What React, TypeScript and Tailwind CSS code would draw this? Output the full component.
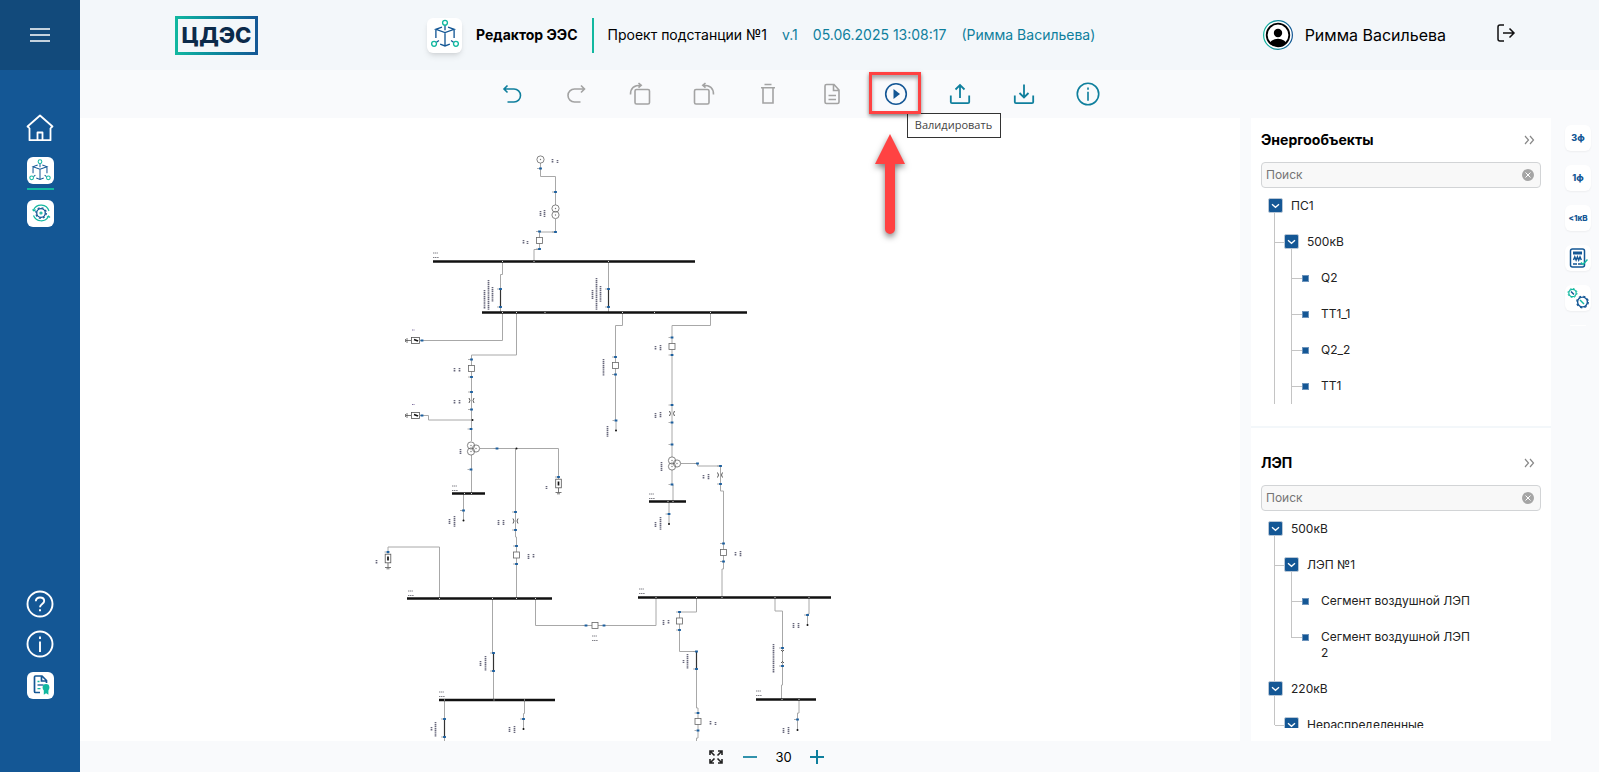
import React from 'react';

interface TreeNode {
  label: string;
  children?: TreeNode[];
  more?: boolean;
}

const substations: TreeNode[] = [
  {
    label: 'ПС1',
    more: true,
    children: [
      {
        label: '500кВ',
        more: true,
        children: [
          { label: 'Q2' },
          { label: 'ТТ1_1' },
          { label: 'Q2_2' },
          { label: 'ТТ1', more: true },
        ],
      },
    ],
  },
];

const powerLines: TreeNode[] = [
  {
    label: '500кВ',
    children: [
      {
        label: 'ЛЭП №1',
        children: [{ label: 'Сегмент воздушной ЛЭП' }, { label: 'Сегмент воздушной ЛЭП 2' }],
      },
    ],
  },
  { label: '220кВ', children: [{ label: 'Нераспределенные', children: [] }] },
];

/* ---------- icons ---------- */

const CubeIcon = ({ size }: { size: number }) => (
  <svg width={size} height={size} viewBox="0 0 28 28" fill="none" strokeWidth="1.1">
    <g stroke="#145795">
      <path d="M14 6v4M11.500 7.500 6.500 9.300l7.500 2.700 7.500-2.700-5-1.800M14 12V23M6.500 9.300v7.200M21.500 9.300v7.200M9 18.500 7 20M10 21.500l4 1.500 4-1.500M19 18.500l2 1.500" />
    </g>
    <g stroke="#12b8a0">
      <circle cx="14" cy="4" r="2" />
      <circle cx="5" cy="21.300" r="2" />
      <circle cx="23" cy="21.300" r="2" />
    </g>
  </svg>
);

const GearCycleIcon = () => (
  <svg width="27" height="27" viewBox="0 0 27 27" fill="none">
    <g stroke="#12b8a0" strokeWidth="1.2">
      <path d="M6.500 10A8.300 8.300 0 0 1 22 11M21.500 16.500A8.300 8.300 0 0 1 6.500 15.500" />
      <path d="m5.500 9.500 1.500 1.500 1.500-1.500M20 17.500l1.500-1.500 1.500 1.500" />
      <circle cx="14" cy="13" r="1" />
    </g>
    <circle cx="14" cy="13" r="4.300" stroke="#145795" strokeWidth="1.300" />
    <circle cx="14" cy="13" r="5.300" stroke="#145795" strokeWidth="1.200" strokeDasharray="2 2.160" />
  </svg>
);

const HomeIcon = () => (
  <svg width="28" height="28" viewBox="0 0 28 28" fill="none" stroke="#fff" strokeWidth="1.800" strokeLinejoin="round">
    <path d="M3.500 14v12.200h21V14M3.500 14 1.500 12.500 14 1.500l12.500 11-2 1.500" />
    <path d="M11.500 26v-7.500h5V26" />
  </svg>
);

const HelpIcon = () => (
  <svg width="28" height="28" viewBox="0 0 28 28" fill="none" stroke="#fff" strokeWidth="1.900">
    <circle cx="14" cy="14" r="12.500" />
    <path d="M9.800 11.200c.200-2.600 2-3.700 4.200-3.700 2.500 0 4.200 1.400 4.200 3.500 0 3-4.200 3-4.200 6.300M14 19.300v2" />
  </svg>
);

const InfoIcon = ({ size }: { size: number }) => (
  <svg width={size} height={size} viewBox="0 0 28 28" fill="none" stroke="currentColor" strokeWidth="1.900">
    <circle cx="14" cy="14" r="12.500" />
    <path d="M14 11.500V22M14 6.500v2.500" />
  </svg>
);

const LicenseIcon = () => (
  <svg width="27" height="27" viewBox="0 0 27 27" fill="none">
    <path d="M13 20.500H8.500a1 1 0 0 1-1-1V5a1 1 0 0 1 1-1H15l4.500 4.500V11M14.500 4v5h5" stroke="#145795" strokeWidth="1.700" />
    <path d="M10.500 13h6" stroke="#145795" strokeWidth="1.300" />
    <path d="M10.500 9.500h2M10.500 16.700h3" stroke="#12b8a0" strokeWidth="1.300" />
    <circle cx="19" cy="15.500" r="3.400" fill="#12b8a0" />
    <path d="M16.800 18h4.600v4.700l-2.300-1.400-2.300 1.400z" fill="#12b8a0" />
  </svg>
);

const LogoutIcon = () => (
  <svg width="20" height="20" viewBox="0 0 20 20" fill="none" stroke="#111" strokeWidth="1.500">
    <path d="M8 2H4a2 2 0 0 0-2 2v12a2 2 0 0 0 2 2h4M7 10h11M13.500 5.500 18 10l-4.500 4.500" />
  </svg>
);

const AvatarIcon = () => (
  <svg width="30" height="30" viewBox="0 0 30 30" fill="none">
    <defs>
      <linearGradient id="ring">
        <stop offset="0" stopColor="#12b8a0" />
        <stop offset="1" stopColor="#145795" />
      </linearGradient>
      <clipPath id="face">
        <circle cx="15" cy="15" r="11.500" />
      </clipPath>
    </defs>
    <circle cx="15" cy="15" r="14.400" stroke="url(#ring)" strokeWidth="1.200" fill="#fff" />
    <circle cx="15" cy="15" r="11.300" stroke="#000" strokeWidth="1.800" />
    <circle cx="15" cy="13" r="4.200" fill="#000" />
    <ellipse cx="15" cy="24.500" rx="8.500" ry="5.700" fill="#000" clipPath="url(#face)" />
  </svg>
);

const Tool = ({ children }: { children: React.ReactNode }) => (
  <svg width="24" height="24" viewBox="0 0 24 24" fill="none" stroke="currentColor" strokeWidth="1.600">
    {children}
  </svg>
);

const tools = [
  { label: 'Отменить', color: 'text-[#0f7f9d]', icon: <Tool><path d="M7.500 3.500 4 7l3.500 3.500M4 7h10a6 6 0 0 1 0 13H7.500" /></Tool> },
  { label: 'Повторить', color: 'text-[#a3a3a3]', icon: <Tool><path d="M17 3.500 20.500 7 17 10.500M20.500 7h-10a6 6 0 0 0 0 13H16.500" /></Tool> },
  { label: 'Повернуть вправо', color: 'text-[#a3a3a3]', icon: <Tool><rect x="7" y="7.500" width="14.500" height="14.500" rx="1.500" /><path d="M2.500 12.500C2.500 6 6 3.300 13 3.300M10.500 1l2.700 2.300-2.700 2.400" /></Tool> },
  { label: 'Повернуть влево', color: 'text-[#a3a3a3]', icon: <Tool><rect x="2.500" y="7.500" width="14.500" height="14.500" rx="1.500" /><path d="M21.500 12.500C21.500 6 18 3.300 11 3.300M13.500 1l-2.700 2.300 2.700 2.400" /></Tool> },
  { label: 'Удалить', color: 'text-[#a3a3a3]', icon: <Tool><path d="M8.500 2.500h7M5 5.700h14M7 6v15h10V6" /></Tool> },
  { label: 'Отчёт', color: 'text-[#a3a3a3]', icon: <Tool><path d="M14 2.500H6.500a1.500 1.500 0 0 0-1.500 1.500v16A1.500 1.500 0 0 0 6.500 21.500h11a1.500 1.500 0 0 0 1.500-1.500V8zM13.500 2.500V8.500H19M8.500 13.500h7.500M8.500 17.500h7.500" /></Tool> },
  { label: 'Валидировать', color: 'text-[#145795]', icon: <Tool><circle cx="12" cy="12" r="10.300" /><path d="M9.500 7v10l6.500-5z" fill="currentColor" stroke="none" /></Tool> },
  { label: 'Выгрузить', color: 'text-[#0f7f9d]', icon: <Tool><path d="M12 16V3M7.500 7.500 12 3l4.500 4.500M2.800 13.500v6.500a1.200 1.200 0 0 0 1.200 1.200h16a1.200 1.200 0 0 0 1.200-1.200V13.500" strokeWidth="1.800" /></Tool> },
  { label: 'Загрузить', color: 'text-[#0f7f9d]', icon: <Tool><path d="M12 2.500v13M7.500 11 12 15.500l4.500-4.500M2.800 13.500v6.500a1.200 1.200 0 0 0 1.200 1.200h16a1.200 1.200 0 0 0 1.200-1.200V13.500" strokeWidth="1.800" /></Tool> },
  { label: 'Информация', color: 'text-[#0f7f9d]', icon: <InfoIcon size={24} /> },
];

/* ---------- one-line diagram ---------- */

const wires = [
  'M540.5 163V176.500H555.500V205M555.500 219V232H539.500V249.500H534V261',
  'M502.500 262V274.500H500.500V312M608.500 262V312',
  'M502.500 312V340.500H420M516.500 312V355H471.500V441M428.500 420H472M420 415.500H428.500V420',
  'M471.500 455V493M463.500 494V520M480 448.500H558.500V479M515.500 448V537H516.500V598',
  'M388 554V547H439.500V598M492.500 598V653H493.500V700M535.500 598V625.500H656V598',
  'M444.500 700V741M524.500 700V713.500H523.500V729',
  'M622.500 312V325.500H615.500V420H616V430M710.500 312V325.500H672V457M672 470V485H673V501M669 501V524',
  'M681 463.500H697.500V466H720.500V491H723.500V569H722V598',
  'M696.500 598V612H679.500V651.500H696.500V708H698V738H696.500V741',
  'M775 598V611H782.500V685H781.500V699M809 598V614H807.500V625M799 699V713H797.500V730',
];

const buses = [
  [433, 695, 261.5], [482, 747, 312.5], [452, 485, 493.5], [407, 552, 598.5],
  [439, 555, 700], [649, 686, 501.5], [638, 831, 597.5], [756, 816, 699.5],
];

const taps = [
  [502.5, 261.5], [534, 261.5], [608.5, 261.5], [502.5, 312.5], [516.5, 312.5], [545, 312.5], [622.5, 312.5],
  [654.5, 312.5], [710.5, 312.5], [464.5, 493.5], [471.5, 493.5], [439.5, 598.5], [492.5, 598.5], [516.5, 598.5],
  [535.5, 598.5], [444.5, 700], [494, 700], [524.5, 700], [668, 501.5], [673, 501.5], [656, 597.5],
  [696.5, 597.5], [722, 597.5], [775, 597.5], [809, 597.5], [782, 699.5], [799, 699.5],
];

const terminals = [
  [540.5, 168.5], [555.5, 192], [555.5, 232], [539.5, 231.5], [539.5, 249], [500.5, 289], [500.5, 307],
  [608.5, 289], [608.5, 307], [422, 340.5], [471.5, 359.5], [471.5, 377], [471.5, 392], [471.5, 409.5],
  [422, 415.5], [471, 429], [471, 469.5], [463.5, 510.5], [497, 448.5], [558.5, 477], [515.5, 512],
  [515.5, 530], [516.5, 546], [516.5, 564], [388, 552], [493.5, 653], [493.5, 671], [586, 625.5],
  [604, 625.5], [444.5, 719], [444.5, 737], [523.5, 719], [615.5, 357], [615.5, 374.5], [616, 420.5],
  [672, 337.5], [672, 355], [672, 405], [672, 422.5], [672, 444.5], [672, 484.5], [669, 514],
  [697.5, 463.5], [720.5, 466], [720.5, 484], [723.5, 543.5], [723.5, 561.5], [679.5, 612], [679.5, 630],
  [696.5, 651.5], [696.5, 669], [698, 713], [698, 730.5], [782.5, 648], [782.5, 666], [807.5, 615], [797.5, 719.5],
];

const breakers = [
  [539.5, 240.5], [471.5, 368.5], [516.5, 555], [595, 625.5], [615.5, 365.5],
  [672, 346.5], [723.5, 552.5], [679.5, 621], [698, 721.5],
];

const segments = [[500.5, 289], [608.5, 289], [493.5, 653], [444.5, 719], [696.5, 651.5]];
const windings = [
  [540.5, 159.5], [555.5, 208.5], [555.5, 215], [471, 445.5], [471, 451.5], [476, 448.5],
  [672, 460.5], [672, 466.5], [677, 463.5],
];
const currentTransformers = [[471.5, 400.5], [515.5, 521], [672, 413.5], [720, 475]];
const nodes = [[472.5, 420], [516.5, 448.5], [463.5, 520.5], [523.5, 729], [616, 430.5], [669, 524], [807.5, 625], [797.5, 730]];

// x, y, height of the vertical captions
const captions = [
  [552, 159, 4], [557, 160, 3], [540, 211, 5], [544, 210, 7], [523, 240, 4], [527, 241, 3],
  [484, 290, 19], [488, 280, 30], [492, 287, 15], [592, 290, 9], [596, 278, 32], [600, 286, 16],
  [454, 368, 4], [459, 368, 4], [454, 400, 4], [459, 400, 4], [460, 449, 5], [449, 519, 5], [454, 516, 11],
  [546, 486, 3], [498, 520, 5], [503, 520, 5], [528, 554, 5], [533, 554, 4], [376, 560, 4],
  [480, 661, 5], [485, 656, 15], [431, 727, 4], [435, 722, 15], [509, 727, 5], [514, 726, 7],
  [603, 359, 17], [607, 426, 11], [655, 346, 4], [660, 345, 6], [655, 413, 5], [660, 412, 6], [661, 462, 9],
  [655, 522, 5], [660, 517, 13], [703, 475, 4], [708, 474, 6], [735, 552, 4], [740, 551, 6],
  [663, 620, 5], [668, 620, 4], [683, 660, 3], [687, 654, 15], [710, 721, 4], [715, 722, 3],
  [773, 644, 29], [793, 623, 5], [798, 623, 5], [783, 728, 5], [788, 727, 7],
];

// x, y of the two-line bus captions
const busCaptions = [[433, 253], [452, 486], [408, 591], [439, 692], [649, 494], [639, 589], [756, 691], [592, 636]];

const Diagram = () => (
  <svg className="block h-full w-full" viewBox="80 118 1160 623" preserveAspectRatio="xMinYMin slice" fill="none">
    {wires.map((d) => (
      <path key={d} d={d} stroke="#a8a8a8" strokeWidth="1" />
    ))}
    {segments.map(([x, y]) => (
      <path key={`${x}-${y}`} d={`M${x} ${y}v18`} stroke="#333" strokeWidth="1.200" />
    ))}
    {captions.map(([x, y, h]) => (
      <path key={`${x}-${y}`} d={`M${x + 0.5} ${y}v${h}`} stroke="#66667a" strokeWidth="1.700" strokeDasharray="1.300 .6" />
    ))}
    {busCaptions.map(([x, y]) => (
      <path key={`${x}-${y}`} d={`M${x} ${y}h5M${x} ${y + 4.5}h6`} stroke="#808088" strokeDasharray="1.300 .5" />
    ))}
    <path d="M412 330h3M412 404.500h3" stroke="#8070a0" strokeDasharray="1 .5" />
    {buses.map(([x1, x2, y]) => (
      <path key={`${x1}-${y}`} d={`M${x1} ${y}H${x2}`} stroke="#111" strokeWidth="2.300" />
    ))}
    {taps.map(([x, y]) => (
      <rect key={`${x}-${y}`} x={x - 0.5} y={y - 0.5} width="1" height="1" fill="#ddd" />
    ))}
    {windings.map(([x, y]) => (
      <g key={`${x}-${y}`}>
        <circle cx={x} cy={y} r="3.600" stroke="#666" strokeWidth=".8" />
        <circle cx={x} cy={y} r=".7" fill="#777" />
      </g>
    ))}
    {breakers.map(([x, y]) => (
      <rect key={`${x}-${y}`} x={x - 3} y={y - 3} width="6" height="6" fill="#fff" stroke="#666" strokeWidth=".8" />
    ))}
    {currentTransformers.map(([x, y]) => (
      <path key={`${x}-${y}`} d={`M${x - 2.5} ${y - 2.5}q2 2.500 0 5M${x + 2.5} ${y - 2.5}q-2 2.500 0 5`} stroke="#444" strokeWidth=".9" />
    ))}
    {[340.5, 415.5].map((y) => (
      <g key={y} stroke="#555" strokeWidth=".8">
        <rect x="411.500" y={y - 3} width="8" height="6" fill="#fff" />
        <path d={`M414 ${y - 1}l4 1.500`} stroke="#111" strokeWidth="1.600" />
        <path d={`M411 ${y}h-5M407 ${y - 2.5}v5M405.500 ${y - 1.5}v3`} />
      </g>
    ))}
    {[[558.5, 483.5], [388, 558.5]].map(([x, y]) => (
      <g key={x} stroke="#555" strokeWidth=".8">
        <rect x={x - 2.8} y={y - 4.3} width="5.600" height="8.600" fill="#fff" />
        <path d={`M${x} ${y - 2}v4`} stroke="#111" strokeWidth="1.700" />
        <path d={`M${x} ${y + 4.5}v4.500M${x - 3} ${y + 9}h6M${x - 1.5} ${y + 10.3}h3`} />
      </g>
    ))}
    {terminals.map(([x, y]) => (
      <g key={`${x}-${y}`}>
        <path d={`M${x - 3.5} ${y}h2`} stroke="#999" strokeWidth=".8" />
        <rect x={x - 1.4} y={y - 1} width="2.800" height="2" fill="#1c5f9e" />
      </g>
    ))}
    <path d="m781 650 1.500 1.500L784 650M781 663l1.500-1.500L784 663" stroke="#333" strokeWidth=".8" />
    {nodes.map(([x, y]) => (
      <circle key={`${x}-${y}`} cx={x} cy={y} r="1" fill="#111" />
    ))}
  </svg>
);

/* ---------- panels ---------- */

const Branch = ({ node, depth, last, first }: { node: TreeNode; depth: number; last: boolean; first: boolean }) => {
  const open = !last || node.more;
  return (
    <li className={`relative ${depth === 1 ? 'pl-4' : ''} ${depth === 2 ? 'pl-4' : ''}`}>
      {depth === 0 && open && <span className={`absolute bottom-0 left-[6px] w-px bg-[#c4c4c4] ${first ? 'top-[18px]' : 'top-0'}`} />}
      {depth === 0 && !first && <span className="absolute left-[6px] top-0 h-[18px] w-px bg-[#c4c4c4]" />}
      {/* the rail reaches up to the parent's toggle */}
      {depth > 0 && (
        <>
          <span className={`absolute -top-[11px] w-px bg-[#c4c4c4] ${depth === 1 ? 'left-[6px]' : 'left-[7px]'} ${open ? 'bottom-0' : 'h-[29px]'}`} />
          <span className="absolute left-[7px] top-[18px] h-px w-3 bg-[#c4c4c4]" />
        </>
      )}
      <div className="flex gap-2 py-[10px]">
        {node.children ? (
          <button aria-label={`Свернуть ${node.label}`} className="relative flex size-[15px] shrink-0 items-center justify-center rounded-xs border border-[#b9c7d6] bg-[#145795]">
            <svg width="9" height="9" viewBox="0 0 9 9" fill="none" stroke="#fff" strokeWidth="1.300">
              <path d="m1 3.300 3.500 3 3.500-3" />
            </svg>
          </button>
        ) : (
          <span className="relative ml-[2px] mr-1 mt-[5px] size-[7px] shrink-0 border border-[#6d94bc] bg-[#145795]" />
        )}
        <span className="w-[150px] text-xs leading-4 text-[#222]">{node.label}</span>
      </div>
      {node.children && (
        <ul>
          {node.children.map((child, i) => (
            <Branch key={child.label} node={child} depth={depth + 1} first={i === 0} last={i === node.children!.length - 1} />
          ))}
        </ul>
      )}
    </li>
  );
};

const TreePanel = ({ id, title, items }: { id: string; title: string; items: TreeNode[] }) => (
  <>
    <div className="flex h-11 shrink-0 items-center justify-between pl-[10px] pr-4">
      <h2 className="text-sm font-bold text-black">
        <label htmlFor={id}>{title}</label>
      </h2>
      <button aria-label={`Скрыть ${title}`}>
        <svg width="11" height="10" viewBox="0 0 11 10" fill="none" stroke="#888" strokeWidth="1.200">
          <path d="m1 1 3.500 4L1 9M6 1l3.500 4L6 9" />
        </svg>
      </button>
    </div>
    <div className="mx-[10px] flex h-[26px] shrink-0 items-center rounded border border-[#d2d4d6] bg-[#f8f8f8] pl-1 pr-[6px]">
      <input id={id} placeholder="Поиск" className="min-w-0 flex-1 bg-transparent text-xs outline-none placeholder:text-[#757575]" />
      <button aria-label="Очистить">
        <svg width="12" height="12" viewBox="0 0 12 12" fill="none">
          <circle cx="6" cy="6" r="6" fill="#a5a5a5" />
          <path d="m3.500 3.500 5 5M8.500 3.500l-5 5" stroke="#fff" />
        </svg>
      </button>
    </div>
    <ul className="min-h-0 flex-1 overflow-hidden pl-[17px]">
      {items.map((node, i) => (
        <Branch key={node.label} node={node} depth={0} first={i === 0} last={i === items.length - 1} />
      ))}
    </ul>
  </>
);

const Tile = ({ label, children }: { label: string; children: React.ReactNode }) => (
  <button aria-label={label} className="flex size-[26px] items-center justify-center rounded-md bg-white text-[9px] font-extrabold text-[#145795] shadow-xs">
    {children}
  </button>
);

const App: React.FC = () => {
  return (
    <div className="flex h-screen overflow-hidden bg-[#f9fafc] font-[Inter,sans-serif] text-black">
      <aside className="flex w-20 shrink-0 flex-col items-center bg-[#145795]">
        <button aria-label="Меню" className="flex h-[70px] w-full items-center justify-center bg-[#124a7b]">
          <svg width="20" height="14" viewBox="0 0 20 14" stroke="#fff" strokeWidth="1.400">
            <path d="M0 1h20M0 7h20M0 13h20" />
          </svg>
        </button>
        <nav className="mt-11 flex flex-col items-center">
          <a href="#home" aria-label="Главная"><HomeIcon /></a>
          <a href="#editor" aria-label="Редактор" className="mt-[15px] flex size-[27px] items-center justify-center rounded-md bg-white">
            <CubeIcon size={26} />
          </a>
          <span className="mt-1 h-[2px] w-[27px] bg-[#12b8a0]" />
          <a href="#calc" aria-label="Расчёт" className="mt-[10px] rounded-md bg-white"><GearCycleIcon /></a>
        </nav>
        <nav className="mb-[73px] mt-auto flex flex-col items-center text-white">
          <a href="#help" aria-label="Помощь"><HelpIcon /></a>
          <a href="#about" aria-label="О программе" className="mb-[14px] mt-3"><InfoIcon size={28} /></a>
          <a href="#license" aria-label="Лицензия" className="rounded-md bg-white"><LicenseIcon /></a>
        </nav>
      </aside>

      <div className="flex min-w-0 flex-1 flex-col">
        <header className="flex h-[70px] shrink-0 items-center bg-[#f3f7fa] pl-[95px] pr-[83px]">
          <div className="bg-linear-to-r from-[#12b8a0] to-[#145795] p-[3px]">
            <div className="flex h-[33px] w-[77px] items-center justify-center bg-[#f3f7fa] text-[22px] font-extrabold text-[#0b2a4a]">ЦДЭС</div>
          </div>
          <div className="ml-[169px] flex size-[35px] items-center justify-center rounded-md bg-white shadow-md">
            <CubeIcon size={34} />
          </div>
          <h1 className="ml-[14px] text-sm font-bold">Редактор ЭЭС</h1>
          <span className="ml-[14px] h-[35px] w-[2px] bg-[#12b8a0]" />
          <span className="ml-[14px] text-sm">Проект подстанции №1</span>
          <div className="ml-[15px] flex gap-[15px] text-sm text-[#0f7f9d]">
            <span>v.1</span>
            <span>05.06.2025 13:08:17</span>
            <span>(Римма Васильева)</span>
          </div>
          <div className="ml-auto flex items-center">
            <AvatarIcon />
            <span className="ml-3 text-base">Римма Васильева</span>
            <button aria-label="Выйти" className="-mt-1 ml-[50px]"><LogoutIcon /></button>
          </div>
        </header>

        <div className="flex h-12 shrink-0 items-center justify-center gap-10 pr-20">
          {tools.map((tool) => (
            <div key={tool.label} className="relative">
              <button aria-label={tool.label} className={`block ${tool.color}`}>{tool.icon}</button>
              {tool.label === 'Валидировать' && (
                <>
                  <div className="absolute left-[23px] top-[31px] z-10 flex h-[25px] w-[94px] items-center justify-center border border-[#333] bg-white font-['Open_Sans',sans-serif] text-[11px] text-[#444]">
                    Валидировать
                  </div>
                  <div className="absolute -left-[15px] -top-[10px] z-20 h-[42px] w-[52px] border-3 border-[#ff4242] shadow-[0_2px_4px_rgba(0,0,0,0.5),inset_0_3px_4px_rgba(0,0,0,0.35)]" />
                  <svg className="absolute -left-[14px] top-[50px] drop-shadow-[0_3px_3px_rgba(0,0,0,0.5)]" width="40" height="104" viewBox="0 0 40 104">
                    <path d="M20 2 35 32H25V97a5 5 0 0 1-10 0V32H5z" fill="#ff4242" />
                  </svg>
                </>
              )}
            </div>
          ))}
        </div>

        <div className="flex min-h-0 flex-1">
          <main className="min-w-0 flex-1 bg-white">
            <Diagram />
          </main>
          <section className="ml-[11px] flex w-[300px] shrink-0 flex-col bg-white">
            <TreePanel id="search-objects" title="Энергообъекты" items={substations} />
            <div className="mb-[13px] mt-[21px] h-[2px] shrink-0 bg-[#f3f7fa]" />
            <TreePanel id="search-lines" title="ЛЭП" items={powerLines} />
            <div className="h-[13px] shrink-0" />
          </section>
          <aside className="flex w-12 shrink-0 flex-col items-center gap-[14px] pl-[6px] pt-[7px]">
            <Tile label="3ф">3ф</Tile>
            <Tile label="1ф">1ф</Tile>
            <Tile label="<1кВ"><span className="text-[8px]">&lt;1кВ</span></Tile>
            <Tile label="Калькулятор">
              <svg width="20" height="20" viewBox="0 0 20 20" fill="none" stroke="#145795">
                <rect x="2.500" y="1" width="14" height="18" rx="2" strokeWidth="1.500" />
                <path d="M5 5h9" strokeWidth="3" />
                <path d="m5.500 12 1.300-3 1.300 3 1.300-3 1.300 3 1.300-3 1.300 3M5 16h4M10 16h4" strokeWidth="1.500" />
                <path d="m13 14.500 2 2 4.500-5" stroke="#12b8a0" strokeWidth="1.500" />
              </svg>
            </Tile>
            <Tile label="Настройки">
              <svg width="24" height="24" viewBox="0 0 24 24" fill="none">
                <g stroke="#12b8a0">
                  <circle cx="6.500" cy="7" r="3.700" strokeWidth="1.200" />
                  <circle cx="6.500" cy="7" r="4.500" strokeDasharray="1.770 1.770" />
                  <path d="m14 14 4 4" strokeWidth="1.500" />
                </g>
                <g stroke="#145795">
                  <path d="m5 5.500 3 3" strokeWidth="1.500" />
                  <circle cx="16.500" cy="16" r="4.900" strokeWidth="1.400" />
                  <circle cx="16.500" cy="16" r="5.800" strokeWidth="1.200" strokeDasharray="2.280 2.280" />
                </g>
              </svg>
            </Tile>
            <span className="h-px w-4 bg-white" />
          </aside>
        </div>

        <footer className="flex h-[31px] shrink-0 items-center justify-center pr-[146px]">
          <button aria-label="На весь экран">
            <svg width="14" height="14" viewBox="0 0 14 14" fill="none" stroke="#222" strokeWidth="1.600">
              <path d="M1 5V1h4M1 1l4.500 4.500M9 1h4v4M13 1 8.500 5.500M1 9v4h4M1 13l4.500-4.500M9 13h4V9M13 13 8.500 8.500" />
            </svg>
          </button>
          <button aria-label="Уменьшить" className="ml-5">
            <svg width="14" height="14" viewBox="0 0 14 14" stroke="#0f7f9d" strokeWidth="1.700"><path d="M0 7h14" /></svg>
          </button>
          <span className="mx-[18px] text-[13px] leading-4">30</span>
          <button aria-label="Увеличить">
            <svg width="14" height="14" viewBox="0 0 14 14" stroke="#0f7f9d" strokeWidth="2"><path d="M0 7h14M7 0v14" /></svg>
          </button>
        </footer>
      </div>
    </div>
  );
};

export default App;
